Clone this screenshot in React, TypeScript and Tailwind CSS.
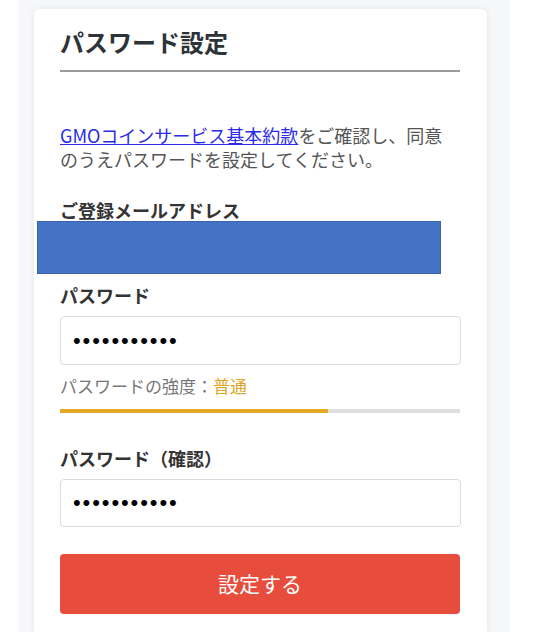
const font = { fontFamily: '"Noto Sans CJK JP", "Noto Sans", sans-serif' };

const PasswordInput = ({ className }: { className: string }) => {
  return (
    <input
      type="password"
      readOnly
      value="aaaaaaaaaaa"
      className={`block w-full rounded-[4px] border border-[#dcdcdc] bg-white pl-[12px] text-[22px] tracking-[1.9px] text-black outline-none ${className}`}
      style={{ fontFamily: '"Liberation Sans", Arial, sans-serif' }}
    />
  );
};

export default function App() {
  return (
    <div className="min-h-[632px] w-[537px] bg-white pl-[19px]" style={font}>
      <div className="min-h-[632px] w-[491px] bg-[#f6f7f9] pl-[15px] pr-[23px] pt-[9px]">
        <div className="min-h-[623px] rounded-t-[6px] bg-white px-[26px] pt-[15px] shadow-[0_0_6px_rgba(0,0,0,0.08)]">
          <h1 className="text-[24px] font-bold leading-[36px] text-[#2e3338]">パスワード設定</h1>
          <div className="mt-[10px] h-[2px] w-[400px] bg-[#9a9a9a]" />

          <p className="mt-[51px] w-[400px] text-[18px] leading-[24px] text-[#555]">
            <a href="#" className="text-[#2b2be8] underline">GMOコインサービス基本約款</a>
            をご確認し、同意のうえパスワードを設定してください。
          </p>

          <div className="mt-[27px] text-[18px] font-bold leading-[24px] text-[#333]">ご登録メールアドレス</div>
          <div className="-ml-[23px] -mt-[1px] h-[53px] w-[404px] border border-[#3c62a8] bg-[#4472c4]" />

          <div className="mt-[9px] text-[18px] font-bold leading-[24px] text-[#333]">パスワード</div>
          <PasswordInput className="mt-[9px] h-[49px] w-[400px]" />
          <div className="mt-[9px] text-[17px] leading-[24px] text-[#777]">
            パスワードの強度：<span className="text-[#e0a526]">普通</span>
          </div>
          <div className="mt-[11px] flex h-[4px] w-[400px] bg-[#dedede]">
            <div className="h-full w-[268px] bg-[#e3a824]" />
          </div>

          <div className="mt-[33px] text-[18px] font-bold leading-[24px] text-[#333]">パスワード（確認）</div>
          <PasswordInput className="mt-[9px] h-[48px] w-[400px]" />

          <button className="mt-[27px] flex h-[60px] w-[400px] items-center justify-center rounded-[4px] bg-[#e74c3c] text-[21px] text-white">
            設定する
          </button>
        </div>
      </div>
    </div>
  );
}
